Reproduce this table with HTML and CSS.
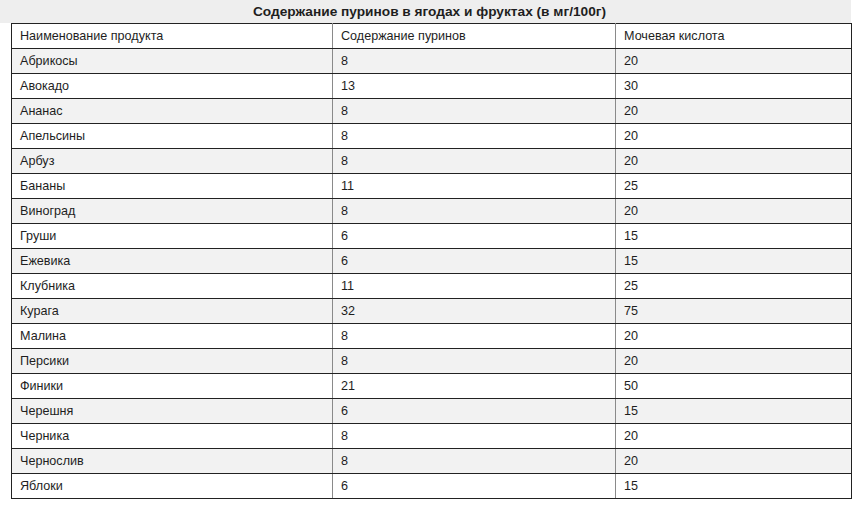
FILE: index.html
```html
<!DOCTYPE html>
<html lang="ru">
<head>
<meta charset="utf-8">
<title>Содержание пуринов</title>
<link rel="stylesheet" href="styles.css">
</head>
<body>
<div class="title">Содержание пуринов в ягодах и фруктах (в мг/100г)</div>
<table class="purines">
<colgroup><col class="c1"><col class="c2"><col class="c3"></colgroup>
<tr class="head"><td>Наименование продукта</td><td>Содержание пуринов</td><td>Мочевая кислота</td></tr>
<tr><td>Абрикосы</td><td>8</td><td>20</td></tr>
<tr><td>Авокадо</td><td>13</td><td>30</td></tr>
<tr><td>Ананас</td><td>8</td><td>20</td></tr>
<tr><td>Апельсины</td><td>8</td><td>20</td></tr>
<tr><td>Арбуз</td><td>8</td><td>20</td></tr>
<tr><td>Бананы</td><td>11</td><td>25</td></tr>
<tr><td>Виноград</td><td>8</td><td>20</td></tr>
<tr><td>Груши</td><td>6</td><td>15</td></tr>
<tr><td>Ежевика</td><td>6</td><td>15</td></tr>
<tr><td>Клубника</td><td>11</td><td>25</td></tr>
<tr><td>Курага</td><td>32</td><td>75</td></tr>
<tr><td>Малина</td><td>8</td><td>20</td></tr>
<tr><td>Персики</td><td>8</td><td>20</td></tr>
<tr><td>Финики</td><td>21</td><td>50</td></tr>
<tr><td>Черешня</td><td>6</td><td>15</td></tr>
<tr><td>Черника</td><td>8</td><td>20</td></tr>
<tr><td>Чернослив</td><td>8</td><td>20</td></tr>
<tr><td>Яблоки</td><td>6</td><td>15</td></tr>
</table>
</body>
</html>
```
FILE: styles.css
```css
html, body {
  margin: 0;
  padding: 0;
  background: #ffffff;
}
body {
  font-family: "Liberation Sans", Arial, sans-serif;
  font-size: 12.6px;
  color: #1e1e1e;
}
.title {
  width: 851px;
  height: 23px;
  line-height: 23px;
  background: #eeeeee;
  font-weight: bold;
  font-size: 13.7px;
  text-align: center;
  padding-left: 8px;
  box-sizing: border-box;
}
.purines {
  margin-left: 11px;
  width: 840px;
  border-collapse: collapse;
  table-layout: fixed;
  border: 1px solid #222222;
}
.c1 { width: 321px; }
.c2 { width: 283px; }
.c3 { width: 236px; }
.purines td {
  height: 25px;
  padding: 0 8px;
  box-sizing: border-box;
  border-top: 1px solid #222222;
  border-bottom: 1px solid #222222;
  border-left: 1px solid #8a8a8a;
  border-right: 1px solid #8a8a8a;
  vertical-align: middle;
  white-space: nowrap;
}
.purines td:first-child { border-left: 1px solid #222222; }
.purines td:last-child { border-right: 1px solid #222222; }
.purines tr:nth-child(even) td { background: #f2f2f2; }
```
